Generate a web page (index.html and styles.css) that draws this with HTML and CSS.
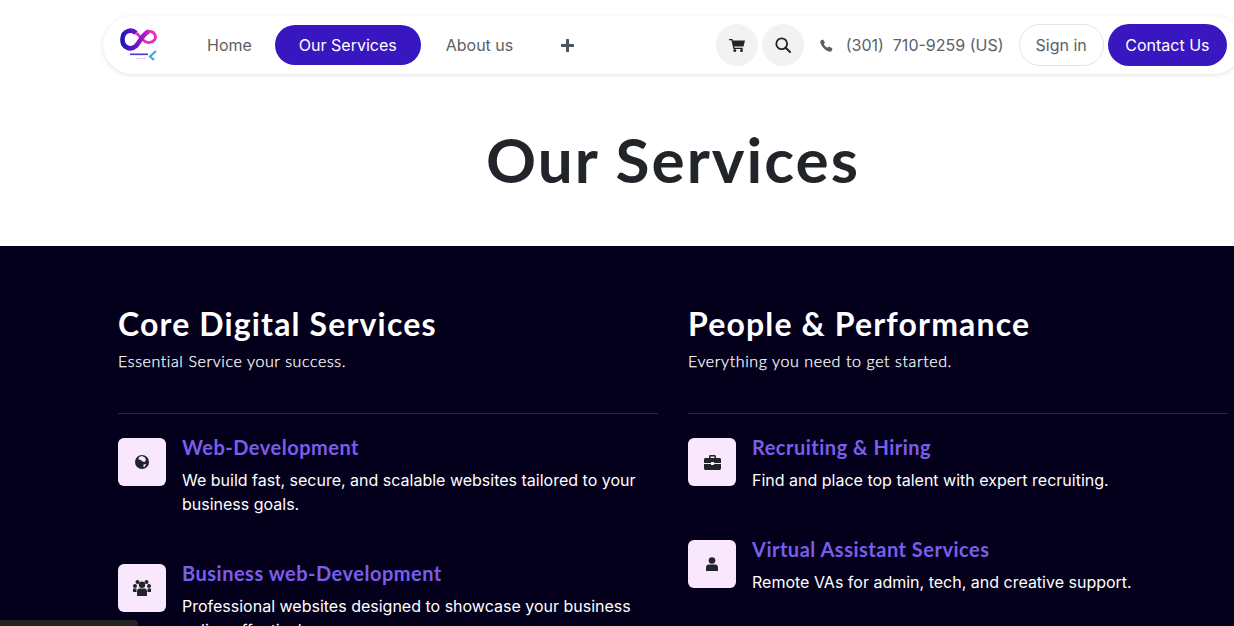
FILE: index.html
```html
<!DOCTYPE html>
<html lang="en">
<head>
    <meta charset="UTF-8">
    <meta name="viewport" content="width=device-width, initial-scale=1.0">
    <title>Our Services</title>
    <link rel="stylesheet" href="styles.css">
</head>
<body>
    <header class="container">
        <nav class="navbar">
            <a class="logo" href="#">
                <svg width="38" height="36" viewBox="0 0 38 36">
                    <defs>
                        <linearGradient id="ring" x1="0" y1="0" x2="1" y2="0">
                            <stop offset="0" stop-color="#2418b4"/>
                            <stop offset="0.55" stop-color="#6f14cc"/>
                            <stop offset="1" stop-color="#d620c0"/>
                        </linearGradient>
                    </defs>
                    <path d="M29 4.500C34 4 37 9 34.500 13C31 17 26 16 23 13C20 10 19 8 16 6" fill="none" stroke="#ee2ab8" stroke-width="2.800"/>
                    <path d="M16 6C12 2 3 3 2.500 12C2 20 10 24 16 19C20 15 23 6 29 4.500" fill="none" stroke="url(#ring)" stroke-width="4.600"/>
                    <path d="M36 24 L30 29.500 L34 33" fill="none" stroke="#36a8f0" stroke-width="2.200"/>
                    <rect x="10" y="26.500" width="18" height="1.600" fill="#4a3ac0"/>
                    <rect x="16" y="31" width="10" height="1" fill="#e6c8f5"/>
                </svg>
            </a>
            <ul class="nav-links">
                <li><a href="#">Home</a></li>
                <li><a class="active" href="#">Our Services</a></li>
                <li><a href="#">About us</a></li>
                <li><a class="more" href="#">
                    <svg width="13" height="13" viewBox="0 0 13 13"><path d="M6.500 1v11M1 6.500h11" stroke="#4e5560" stroke-width="3" stroke-linecap="round"/></svg>
                </a></li>
            </ul>
            <div class="nav-right">
                <button class="icon-btn" aria-label="Cart">
                    <svg width="16" height="13" viewBox="0 0 16 13"><path fill="#212529" d="M0 0h3.500l.4 1.500H16l-1.500 6H5.200l.3 1.300h8.300v1.200H4.400L2.400 1.300H0z"/><circle cx="5.800" cy="11.500" r="1.500" fill="#212529"/><circle cx="12.500" cy="11.500" r="1.500" fill="#212529"/></svg>
                </button>
                <button class="icon-btn" aria-label="Search">
                    <svg width="16" height="16" viewBox="0 0 16 16"><circle cx="6.700" cy="6.700" r="5.400" fill="none" stroke="#212529" stroke-width="1.800"/><path d="M10.700 10.700l4.300 4.300" stroke="#212529" stroke-width="2" stroke-linecap="round"/></svg>
                </button>
                <svg class="phone-icon" width="13" height="13" viewBox="0 0 13 13"><path fill="#5a5f66" d="M3 .5l2 3-1.200 1.500c.7 1.600 2.100 3 3.700 3.700L9 7.500l3.500 2-.8 2.300c-.3.700-1 1-1.700.9C5.500 12 1 7.500.3 3 .2 2.300.6 1.600 1.200 1.300z"/></svg>
                <span class="phone">(301)&nbsp; 710-9259 (US)</span>
                <a class="sign-in" href="#">Sign in</a>
                <a class="contact" href="#">Contact Us</a>
            </div>
        </nav>
        <h1 class="page-title">Our Services</h1>
    </header>

    <section class="services">
        <div class="container services-grid">
            <div class="column">
                <h2>Core Digital Services</h2>
                <p class="subtitle">Essential Service your success.</p>
                <hr>
                <div class="service">
                    <div class="service-icon">
                        <svg width="16" height="16" viewBox="0 0 16 16"><circle cx="8" cy="8" r="7" fill="#212529"/><path fill="#f9e8fd" d="M5 3l3-1 3 1.500 1 2.500-1.500 2-2-.5-1.500-1.500-2.500-.5zM9.500 10.500l2.500-.5-.8 2.300-1.700 1z"/></svg>
                    </div>
                    <div>
                        <h3>Web-Development</h3>
                        <p>We build fast, secure, and scalable websites tailored to your business goals.</p>
                    </div>
                </div>
                <div class="service">
                    <div class="service-icon">
                        <svg width="18" height="16" viewBox="0 0 18 16"><g fill="#212529"><circle cx="4.500" cy="2" r="2"/><circle cx="13.500" cy="2" r="2"/><circle cx="9" cy="4.700" r="3.200"/><circle cx="2" cy="6" r="2"/><circle cx="16" cy="6" r="2"/><path d="M0 8.500h3.500v3.500H0zM14.500 8.500H18V12h-3.500zM5.500 8.500h7l1.500 2V16H4v-5.500z"/></g></svg>
                    </div>
                    <div>
                        <h3>Business web-Development</h3>
                        <p>Professional websites designed to showcase your business online effectively.</p>
                    </div>
                </div>
            </div>
            <div class="column">
                <h2>People &amp; Performance</h2>
                <p class="subtitle">Everything you need to get started.</p>
                <hr>
                <div class="service">
                    <div class="service-icon">
                        <svg width="17" height="15" viewBox="0 0 17 15"><path fill="#212529" d="M5 3V1.500C5 .7 5.700 0 6.500 0h4c.8 0 1.500.7 1.500 1.500V3h3.500c.8 0 1.500.7 1.500 1.500V8H10V7H7v1H0V4.500C0 3.700.7 3 1.500 3zm1.500 0h4V1.500h-4zM0 9h7v1h3V9h7v4.500c0 .8-.7 1.500-1.500 1.500h-14C.7 15 0 14.300 0 13.500z"/></svg>
                    </div>
                    <div>
                        <h3>Recruiting &amp; Hiring</h3>
                        <p>Find and place top talent with expert recruiting.</p>
                    </div>
                </div>
                <div class="service">
                    <div class="service-icon">
                        <svg width="12" height="14" viewBox="0 0 12 14"><circle cx="6" cy="3.500" r="3.300" fill="#212529"/><path fill="#212529" d="M2.500 7.500h7C11 7.500 12 9 12 11v3H0v-3c0-2 1-3.500 2.500-3.500z"/></svg>
                    </div>
                    <div>
                        <h3>Virtual Assistant Services</h3>
                        <p>Remote VAs for admin, tech, and creative support.</p>
                    </div>
                </div>
            </div>
        </div>
    </section>

    <div class="status-bar"></div>
</body>
</html>
```

FILE: styles.css
```css
* {
    box-sizing: border-box;
}

html, body {
    height: 626px;
    overflow: hidden;
}

body {
    margin: 0;
    font-family: 'Inter', sans-serif;
    background-color: #fff;
    color: #212529;
    position: relative;
}

a {
    text-decoration: none;
}

.container {
    width: 1140px;
    margin-left: 103px;
}

header.container {
    padding-top: 16px;
}

/* navbar */
.navbar {
    display: flex;
    align-items: center;
    height: 58px;
    padding-left: 17px;
    background-color: #fff;
    border-radius: 30px;
    box-shadow: 0 1px 4px rgba(0, 0, 0, 0.12);
}

.logo {
    display: flex;
    width: 38px;
}

.nav-links {
    display: flex;
    align-items: center;
    list-style: none;
    margin: 0 0 0 25px;
    padding: 0;
}

.nav-links a {
    display: block;
    padding: 0 24px;
    line-height: 40px;
    font-size: 16px;
    color: #5a5f66;
    border-radius: 20px;
}

.nav-links a.active {
    margin: 0 1px 0 -1px;
    background-color: #3817c1;
    color: #fff;
}

.nav-links a.more {
    display: flex;
    align-items: center;
    height: 40px;
    padding: 0 0 0 24px;
}

.nav-right {
    display: flex;
    align-items: center;
    margin-left: auto;
    padding-right: 16px;
}

.icon-btn {
    display: flex;
    align-items: center;
    justify-content: center;
    width: 42px;
    height: 42px;
    margin-right: 4px;
    padding: 0;
    border: none;
    border-radius: 50%;
    background-color: #f2f2f2;
}

.phone-icon {
    margin-left: 12px;
}

.phone {
    margin-left: 13px;
    font-size: 16px;
    color: #5a5f66;
}

.sign-in {
    margin-left: 15px;
    padding: 0 16px;
    line-height: 40px;
    font-size: 16px;
    color: #5a5f66;
    border: 1px solid #e4e4e4;
    border-radius: 21px;
}

.contact {
    margin-left: 4px;
    padding: 0 17.500px;
    line-height: 42px;
    font-size: 16px;
    color: #fff;
    background-color: #3817c1;
    border-radius: 21px;
}

/* heading */
.page-title {
    margin: 0;
    padding-top: 47px;
    height: 172px;
    text-align: center;
    font-family: 'Lato', sans-serif;
    font-size: 62px;
    line-height: 76px;
    font-weight: 700;
    letter-spacing: 2px;
    color: #212529;
}

/* services */
.services {
    height: 380px;
    padding-top: 56px;
    background-color: #04001c;
    color: #fff;
}

.services-grid {
    display: grid;
    grid-template-columns: 540px 540px;
    column-gap: 30px;
    padding: 0 15px;
}

.column h2 {
    margin: 0;
    font-family: 'Lato', sans-serif;
    font-size: 32px;
    line-height: 44px;
    font-weight: 700;
    letter-spacing: 1.15px;
}

.subtitle {
    margin: 3px 0 0;
    font-family: 'Lato', sans-serif;
    font-size: 16px;
    line-height: 24px;
    font-weight: 300;
    letter-spacing: 0.6px;
    color: #fff;
    -webkit-text-stroke: 0.25px #fff;
}

.column hr {
    margin: 40px 0 19px;
    border: none;
    border-top: 1px solid #2d2a3e;
}

.service {
    display: flex;
    gap: 16px;
    margin-bottom: 43px;
}

.service-icon {
    display: flex;
    align-items: center;
    justify-content: center;
    flex: none;
    width: 48px;
    height: 48px;
    margin-top: 5px;
    background-color: #f9e8fd;
    border-radius: 6px;
}

.service h3 {
    margin: 0 0 7px;
    font-family: 'Lato', sans-serif;
    font-size: 20px;
    line-height: 28px;
    font-weight: 700;
    letter-spacing: 0.5px;
    color: #7a5ee8;
}

.service p {
    margin: 0;
    font-size: 16px;
    line-height: 24px;
    color: #fff;
}

.status-bar {
    position: absolute;
    left: 0;
    bottom: 0;
    width: 138px;
    height: 6px;
    background-color: #222;
    border-top-right-radius: 4px;
}
```
